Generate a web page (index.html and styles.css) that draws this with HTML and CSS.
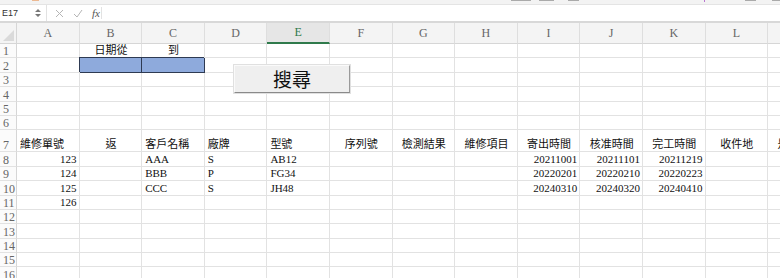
FILE: index.html
```html
<!DOCTYPE html>
<html>
<head>
  <title>維修紀錄</title>
  <link rel="stylesheet" href="styles.css">
</head>
<body>
  <div class="ribbon">
    <span class="frag frag-orange"></span>
    <span class="frag frag-a"></span>
    <span class="frag frag-b"></span>
    <span class="frag frag-c"></span>
    <span class="frag frag-purple"></span>
    <span class="frag frag-d"></span>
    <span class="frag frag-e"></span>
  </div>

  <div class="formula-bar">
    <div class="name-box">
      <span class="name-text">E17</span>
      <svg class="spin" width="6" height="10" viewBox="0 0 6 10">
        <path d="M0 4 L3 1 L6 4 Z M0 6 L3 9 L6 6 Z" fill="#777"/>
      </svg>
    </div>
    <div class="fx-icons">
      <svg width="9" height="9" viewBox="0 0 9 9"><path d="M1 1 L8 8 M8 1 L1 8" stroke="#b5b5b5" stroke-width="1"/></svg>
      <svg width="10" height="9" viewBox="0 0 10 9"><path d="M1 5 L4 8 L9 1" stroke="#b5b5b5" stroke-width="1" fill="none"/></svg>
      <span class="fx">fx</span>
    </div>
    <div class="formula-input"></div>
  </div>

  <div class="sheet-wrap">
    <div class="sheet" id="sheet"></div>
    <button class="search-btn">搜尋</button>
  </div>

  <script>
    // Sheet columns and row count
    const COLS = ['A', 'B', 'C', 'D', 'E', 'F', 'G', 'H', 'I', 'J', 'K', 'L', 'M'];
    const ROW_COUNT = 16;

    // Cell contents: row -> column -> [text, alignment]
    const cells = {
      1: { B: ['日期從', 'center'], C: ['到', 'center'] },
      7: {
        A: ['維修單號', 'left'], B: ['返', 'center'], C: ['客戶名稱', 'left'],
        D: ['廠牌', 'left'], E: ['型號', 'left'], F: ['序列號', 'center'],
        G: ['檢測結果', 'center'], H: ['維修項目', 'center'], I: ['寄出時間', 'center'],
        J: ['核准時間', 'center'], K: ['完工時間', 'center'], L: ['收件地', 'center'],
        M: ['是否保固', 'center']
      },
      8: {
        A: ['123', 'right'], C: ['AAA', 'left'], D: ['S', 'left'], E: ['AB12', 'left'],
        I: ['20211001', 'right'], J: ['20211101', 'right'], K: ['20211219', 'right']
      },
      9: {
        A: ['124', 'right'], C: ['BBB', 'left'], D: ['P', 'left'], E: ['FG34', 'left'],
        I: ['20220201', 'right'], J: ['20220210', 'right'], K: ['20220223', 'right']
      },
      10: {
        A: ['125', 'right'], C: ['CCC', 'left'], D: ['S', 'left'], E: ['JH48', 'left'],
        I: ['20240310', 'right'], J: ['20240320', 'right'], K: ['20240410', 'right']
      },
      11: { A: ['126', 'right'] }
    };

    // Cells with a blue fill
    const filled = ['B2', 'C2'];

    const sheet = document.getElementById('sheet');

    function addCell(className, text) {
      const div = document.createElement('div');
      div.className = className;
      if (text) div.textContent = text;
      sheet.appendChild(div);
      return div;
    }

    // Header row
    addCell('corner');
    COLS.forEach((col) => {
      addCell(col === 'E' ? 'col-head active' : 'col-head', col);
    });

    // Body rows
    for (let r = 1; r <= ROW_COUNT; r++) {
      addCell('row-head', String(r));
      COLS.forEach((col) => {
        const entry = cells[r] && cells[r][col];
        let cls = 'cell';
        if (entry) cls += ' ' + entry[1];
        if (filled.includes(col + r)) cls += ' fill';
        addCell(cls, entry ? entry[0] : '');
      });
    }
  </script>
</body>
</html>
```

FILE: styles.css
```css
body {
  margin: 0;
  padding: 0;
  width: 780px;
  height: 278px;
  overflow: hidden;
  background: #fff;
  font-family: "Liberation Serif", "Noto Sans CJK TC", serif;
}
.ribbon {
  height: 4px;
  background: #f3f3f3;
  border-bottom: 1px solid #e4e4e4;
  display: flex;
  align-items: flex-start;
}
.frag {
  height: 1px;
  background: #8a8a8a;
  opacity: 0.7;
}
.frag-orange {
  width: 8px;
  margin-left: 32px;
  background: #e8a06a;
}
.frag-a {
  width: 24px;
  margin-left: 472px;
}
.frag-b {
  width: 18px;
  margin-left: 8px;
}
.frag-c {
  width: 12px;
  margin-left: 14px;
}
.frag-purple {
  width: 2px;
  height: 2px;
  margin-left: 125px;
  background: #a040c0;
}
.frag-d {
  width: 12px;
  margin-left: 40px;
}
.frag-e {
  width: 10px;
  margin-left: 16px;
}
.formula-bar {
  height: 16px;
  display: flex;
  align-items: center;
  border-bottom: 2px solid #d8d8d8;
  background: #fff;
  font-family: "Liberation Sans", "Noto Sans CJK TC", sans-serif;
}
.name-box {
  width: 47px;
  height: 100%;
  display: flex;
  align-items: center;
  justify-content: space-between;
  padding: 0 5px 0 2px;
  box-sizing: border-box;
  border-right: 1px solid #e2e2e2;
}
.name-text {
  font-size: 9px;
  color: #333;
}
.fx-icons {
  width: 55px;
  height: 12px;
  display: flex;
  align-items: center;
  gap: 9px;
  padding-left: 8px;
  box-sizing: border-box;
  border-right: 1px solid #e2e2e2;
}
.fx {
  font-family: "Liberation Serif", serif;
  font-style: italic;
  font-size: 11px;
  color: #555;
}
.formula-input {
  flex: 1;
}
.sheet-wrap {
  position: relative;
}
.sheet {
  display: grid;
  grid-template-columns: 17px repeat(13, 62.6px);
  grid-template-rows: 21px repeat(6, 14.4px) 22px repeat(9, 14.4px);
  font-size: 11px;
  color: #111;
}
.corner {
  background: #f4f4f4;
  border-right: 1px solid #d6d6d6;
  border-bottom: 1px solid #d6d6d6;
  position: relative;
}
.corner::after {
  content: "";
  position: absolute;
  right: 2px;
  bottom: 2px;
  width: 11px;
  height: 11px;
  background: #dadada;
  clip-path: polygon(100% 0, 100% 100%, 0 100%);
}
.col-head {
  background: #f4f4f4;
  border-right: 1px solid #dedede;
  border-bottom: 1px solid #d6d6d6;
  display: flex;
  align-items: center;
  justify-content: center;
  font-size: 12px;
  color: #666;
}
.col-head.active {
  background: #e6e6e6;
  color: #2f7a4b;
  border-bottom: 2px solid #2f7a4b;
}
.row-head {
  background: #fbfbfb;
  border-right: 1px solid #d6d6d6;
  border-bottom: 1px solid #e2e2e2;
  display: flex;
  align-items: flex-end;
  padding-left: 3px;
  font-size: 12px;
  line-height: 12px;
  color: #666;
  overflow: hidden;
}
.cell {
  border-right: 1px solid #e2e2e2;
  border-bottom: 1px solid #e2e2e2;
  display: flex;
  align-items: flex-end;
  padding: 0 2px 0 3px;
  line-height: 13px;
  white-space: nowrap;
  overflow: hidden;
  box-sizing: border-box;
}
.cell.left {
  justify-content: flex-start;
}
.cell.center {
  justify-content: center;
}
.cell.right {
  justify-content: flex-end;
}
.cell.fill {
  background: #8eaadc;
  border-right-color: #2e3a52;
  border-bottom-color: #2e3a52;
  box-shadow: -1px -1px 0 0 #2e3a52;
}
.search-btn {
  position: absolute;
  left: 234px;
  top: 42px;
  width: 116px;
  height: 28px;
  padding: 0;
  background: #efefef;
  border: 1px solid;
  border-color: #fafafa #9a9a9a #8a8a8a #fafafa;
  box-shadow: 0 0 0 1px #e0e0e0;
  font-family: "Noto Sans CJK TC", sans-serif;
  font-size: 19px;
  line-height: 26px;
  color: #111;
}
```
